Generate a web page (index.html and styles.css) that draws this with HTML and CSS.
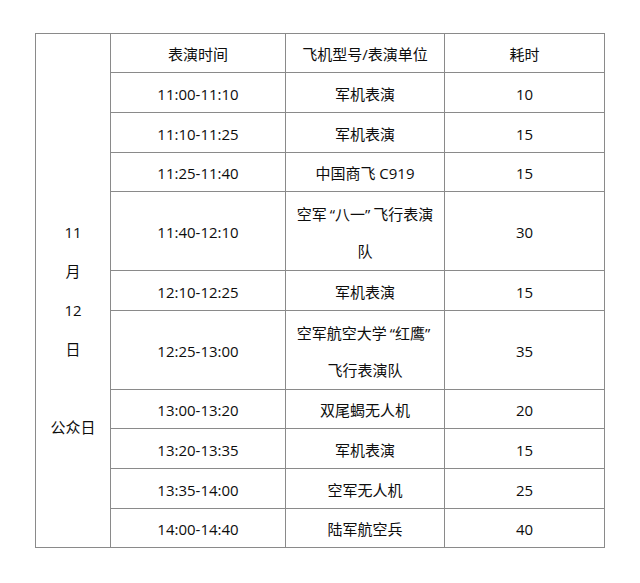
FILE: index.html
```html
<!DOCTYPE html>
<html lang="zh-CN">
<head>
<meta charset="utf-8">
<link rel="stylesheet" href="styles.css">
</head>
<body>
<table class="schedule">
  <colgroup>
    <col class="c-day">
    <col class="c-time">
    <col class="c-unit">
    <col class="c-dur">
  </colgroup>
  <tr class="r39">
    <td class="day" rowspan="12">11<br>月<br>12<br>日<br><br>公众日</td>
    <td>表演时间</td>
    <td>飞机型号/表演单位</td>
    <td>耗时</td>
  </tr>
  <tr class="r40"><td>11:00-11:10</td><td>军机表演</td><td>10</td></tr>
  <tr class="r40"><td>11:10-11:25</td><td>军机表演</td><td>15</td></tr>
  <tr class="r39"><td>11:25-11:40</td><td>中国商飞 C919</td><td>15</td></tr>
  <tr class="r79"><td>11:40-12:10</td><td class="two">空军<span class="qo">“</span>八一<span class="qc">”</span>飞行表演<br>队</td><td>30</td></tr>
  <tr class="r40"><td>12:10-12:25</td><td>军机表演</td><td>15</td></tr>
  <tr class="r79"><td>12:25-13:00</td><td class="two">空军航空大学<span class="qo">“</span>红鹰<span class="qc">”</span><br>飞行表演队</td><td>35</td></tr>
  <tr class="r39"><td>13:00-13:20</td><td>双尾蝎无人机</td><td>20</td></tr>
  <tr class="r40"><td>13:20-13:35</td><td>军机表演</td><td>15</td></tr>
  <tr class="r40"><td>13:35-14:00</td><td>空军无人机</td><td>25</td></tr>
  <tr class="r39"><td>14:00-14:40</td><td>陆军航空兵</td><td>40</td></tr>
</table>
</body>
</html>
```

FILE: styles.css
```css
html, body {
  margin: 0;
  padding: 0;
  background: #fff;
}

body {
  font-family: "Open Sans", "Noto Sans CJK SC", sans-serif;
  font-size: 15px;
  color: #0d0d0d;
}

.schedule {
  border-collapse: collapse;
  table-layout: fixed;
  margin: 33px 0 0 35px;
  width: 569px;
}

.c-day { width: 75px; }
.c-time { width: 175px; }
.c-unit { width: 159px; }
.c-dur { width: 160px; }

.schedule td {
  border: 1px solid #8a8a8a;
  text-align: center;
  vertical-align: middle;
  padding: 2px 0 0;
  line-height: 20px;
  white-space: nowrap;
}

.r39 { height: 39px; }
.r40 { height: 40px; }
.r79 { height: 79px; }

.schedule td.two {
  line-height: 37px;
  padding-top: 3px;
}

.qo { margin-left: 3px; }
.qc { margin-right: 3px; }

.schedule td.day {
  vertical-align: top;
  line-height: 39px;
  padding-top: 179px;
}
```
